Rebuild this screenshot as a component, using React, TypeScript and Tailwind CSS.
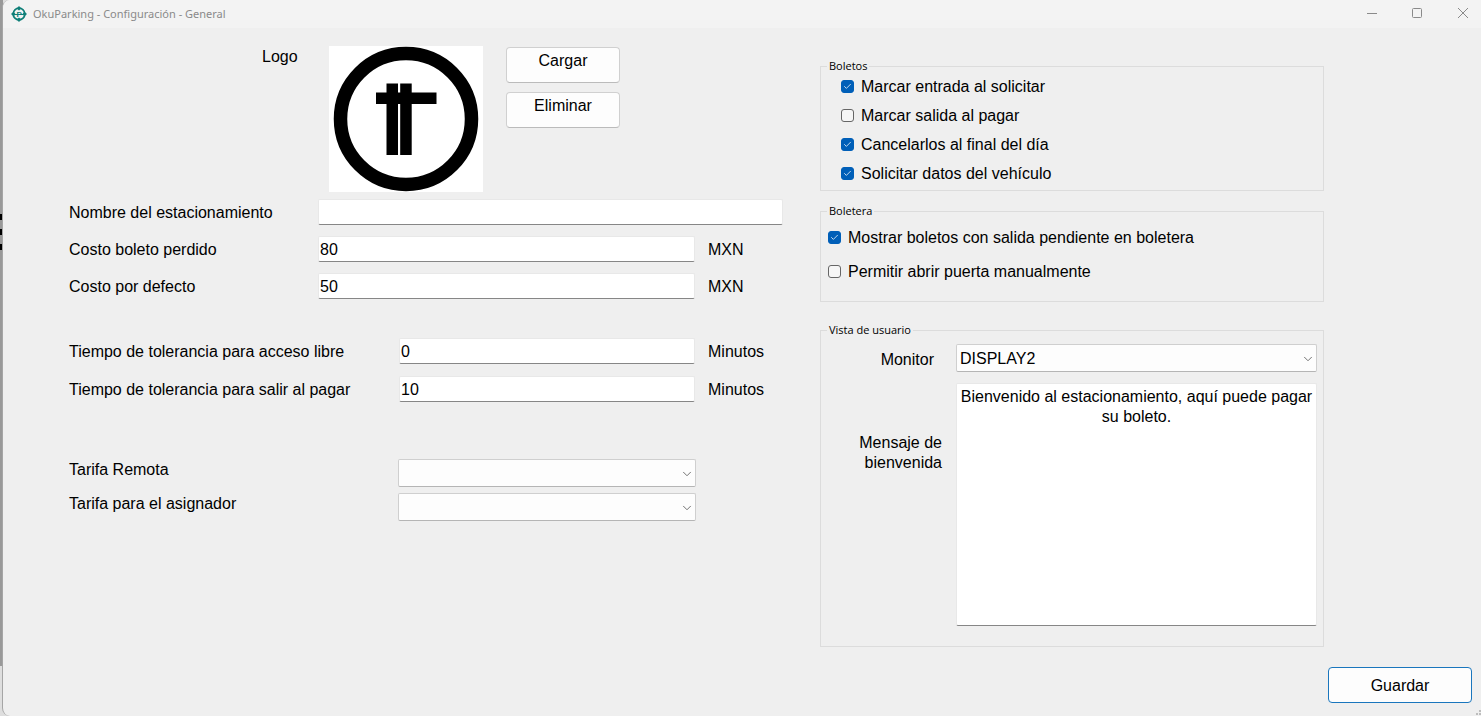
import { useState } from 'react'
import type { ReactNode } from 'react'
import { Check, ChevronDown } from 'lucide-react'

const inputClass =
  'h-[26px] min-w-0 flex-1 border border-[#e8e8e8] border-b-[#868686] rounded-xs bg-white px-px pt-[2px] outline-none'

function AppIcon() {
  return (
    <svg className="size-4 shrink-0" viewBox="0 0 16 16" fill="none" stroke="#0f7f78" aria-hidden="true">
      <circle cx="8" cy="8" r="5.8" strokeWidth="1.7" />
      <path d="M8 0l2.4 2.6L8 4.4 5.600 2.600zM8 16l2.400-2.600L8 11.600l-2.400 1.800zM0 8l2.600-2.400L4.400 8l-1.800 2.400zM16 8l-2.600-2.400L11.600 8l1.800 2.400z" fill="#0f7f78" stroke="none" />
      <path d="M3 8.500h10" strokeWidth="1" />
      <text x="8.200" y="10.800" textAnchor="middle" fontSize="8" fontWeight="700" fontFamily="Liberation Sans, sans-serif" fill="#0f7f78" stroke="none">
        P
      </text>
    </svg>
  )
}

function ParkingLogo() {
  return (
    <svg className="h-[146px] w-[154px] shrink-0 bg-white" viewBox="0 0 154 146" role="img" aria-label="Logo">
      <circle cx="77" cy="73" r="65.5" fill="none" stroke="#000" strokeWidth="13.5" />
      <rect x="57.5" y="37.5" width="11.5" height="71.5" />
      <rect x="71.2" y="37.5" width="11.5" height="71.5" />
      <rect x="47" y="46.5" width="60.5" height="11.5" />
    </svg>
  )
}

function TitleBar() {
  return (
    <header className="flex h-7 items-center bg-[#f3f3f3] pl-2 font-['Noto_Sans',sans-serif] text-[11px] text-[#8a8a8a]">
      <AppIcon />
      <h1 className="ml-[6px] flex-1">OkuParking - Configuración - General</h1>
      <button type="button" aria-label="Minimizar" className="flex h-7 w-[45px] items-center justify-center">
        <svg className="size-[10px]" viewBox="0 0 10 10" stroke="#8a8a8a" fill="none">
          <path d="M0 4.5h10" />
        </svg>
      </button>
      <button type="button" aria-label="Maximizar" className="flex h-7 w-[45px] items-center justify-center pb-[2px]">
        <svg className="size-[10px]" viewBox="0 0 10 10" stroke="#8a8a8a" fill="none">
          <rect x="0.5" y="0.5" width="9" height="9" rx="1" />
        </svg>
      </button>
      <button type="button" aria-label="Cerrar" className="flex h-7 w-[42px] items-center justify-center pb-[2px] pl-[5px]">
        <svg className="size-[10px]" viewBox="0 0 10 10" stroke="#8a8a8a" fill="none">
          <path d="M0 0l10 10M10 0L0 10" />
        </svg>
      </button>
    </header>
  )
}

type FieldProps = {
  id: string
  label: string
  value?: string
  unit?: string
  wide?: boolean
}

function Field({ id, label, value = '', unit, wide }: FieldProps) {
  const [text, setText] = useState(value)

  return (
    <div className="flex items-center">
      <label htmlFor={id} className={wide ? 'w-[330px] shrink-0 pt-px' : 'w-[249px] shrink-0 pt-[2px]'}>
        {label}
      </label>
      <input id={id} type="text" value={text} onChange={(e) => setText(e.target.value)} className={inputClass} />
      {unit && <span className="w-[88px] shrink-0 pl-[13px] pt-px">{unit}</span>}
    </div>
  )
}

function Select({ id, options }: { id: string; options: string[] }) {
  return (
    <div className="grid min-w-0 flex-1 items-center">
      <select
        id={id}
        className="col-start-1 row-start-1 h-7 w-full appearance-none rounded-xs border border-[#cfcfcf] border-b-[#b5b5b5] bg-[#fdfdfd] pl-[3px] pr-6 pt-[2px] outline-none"
      >
        {options.map((option) => (
          <option key={option}>{option}</option>
        ))}
      </select>
      <ChevronDown className="pointer-events-none col-start-1 row-start-1 mr-[2px] mt-px size-[14px] justify-self-end text-[#606060]" strokeWidth={1.5} />
    </div>
  )
}

function Checkbox({ label, checked }: { label: string; checked?: boolean }) {
  return (
    <label className="flex h-5 items-center gap-[7px]">
      <span className="grid place-items-center">
        <input
          type="checkbox"
          defaultChecked={checked}
          className="peer col-start-1 row-start-1 size-[13px] appearance-none rounded-[3px] border border-[#666] bg-[#f6f6f6] checked:border-[#005fb8] checked:bg-[#005fb8]"
        />
        <Check className="pointer-events-none invisible col-start-1 row-start-1 size-[9px] text-white peer-checked:visible" strokeWidth={2} />
      </span>
      <span className="pt-[2px]">{label}</span>
    </label>
  )
}

function Group({ title, className, children }: { title: string; className: string; children: ReactNode }) {
  return (
    <fieldset className={`min-w-0 border border-[#dcdcdc] ${className}`}>
      <legend className="ml-[6px] px-[2px] font-['Open_Sans',sans-serif] text-[11px] leading-4">{title}</legend>
      {children}
    </fieldset>
  )
}

function App() {
  const [message, setMessage] = useState('Bienvenido al estacionamiento, aquí puede pagar su boleto.')

  return (
    <div className="flex min-h-screen bg-[#dedede] font-['Liberation_Sans',Arial,sans-serif] text-base leading-5 text-black">
      <div className="flex w-[3px] shrink-0 flex-col pb-[50px]" aria-hidden="true">
        <div className="flex flex-1 flex-col gap-[9px] bg-[#999] pt-[214px]">
          <i className="h-[6px] w-[2px] bg-black" />
          <i className="h-[6px] w-[2px] bg-black" />
          <i className="h-[6px] w-[2px] bg-black" />
        </div>
      </div>

      <div className="-ml-px flex min-w-0 flex-1 flex-col overflow-hidden rounded-l-lg border-l border-[#a5a5a5] bg-[#efefef]">
        <TitleBar />

        <form className="flex flex-1 flex-col" onSubmit={(e) => e.preventDefault()}>
          <div className="grid grid-cols-[minmax(0,1fr)_504px] gap-[37px] pl-[66px] pr-[157px]">
            <section className="pt-[18px]">
              <div className="flex pl-[193px]">
                <span className="w-[67px] pt-px">Logo</span>
                <ParkingLogo />
                <div className="ml-[23px] flex flex-col gap-[9px] pt-px">
                  <button type="button" className="flex h-9 w-[114px] justify-center rounded border border-[#d0d0d0] border-b-[#bbb] bg-[#fdfdfd] pt-[3px]">
                    Cargar
                  </button>
                  <button type="button" className="flex h-9 w-[114px] justify-center rounded border border-[#d0d0d0] border-b-[#bbb] bg-[#fdfdfd] pt-[3px]">
                    Eliminar
                  </button>
                </div>
              </div>

              <div className="mt-[7px] flex flex-col gap-[11px]">
                <Field id="nombre" label="Nombre del estacionamiento" />
                <Field id="boleto-perdido" label="Costo boleto perdido" value="80" unit="MXN" />
                <Field id="costo-defecto" label="Costo por defecto" value="50" unit="MXN" />
              </div>

              <div className="mt-[39px] flex flex-col gap-3">
                <Field id="acceso-libre" label="Tiempo de tolerancia para acceso libre" value="0" unit="Minutos" wide />
                <Field id="salir-pagar" label="Tiempo de tolerancia para salir al pagar" value="10" unit="Minutos" wide />
              </div>

              <div className="mt-[57px] flex flex-col gap-[6px] pr-[87px]">
                <div className="flex">
                  <label htmlFor="tarifa-remota" className="w-[329px] shrink-0 pt-px">Tarifa Remota</label>
                  <Select id="tarifa-remota" options={['']} />
                </div>
                <div className="flex">
                  <label htmlFor="tarifa-asignador" className="w-[329px] shrink-0 pt-px">Tarifa para el asignador</label>
                  <Select id="tarifa-asignador" options={['']} />
                </div>
              </div>
            </section>

            <section className="flex flex-col pt-[30px]">
              <Group title="Boletos" className="h-[133px]">
                <div className="flex flex-col gap-[9px] pl-5 pt-[2px]">
                  <Checkbox label="Marcar entrada al solicitar" checked />
                  <Checkbox label="Marcar salida al pagar" />
                  <Checkbox label="Cancelarlos al final del día" checked />
                  <Checkbox label="Solicitar datos del vehículo" checked />
                </div>
              </Group>

              <Group title="Boletera" className="mt-3 h-[99px]">
                <div className="flex flex-col gap-[14px] pl-[7px] pt-2">
                  <Checkbox label="Mostrar boletos con salida pendiente en boletera" checked />
                  <Checkbox label="Permitir abrir puerta manualmente" />
                </div>
              </Group>

              <Group title="Vista de usuario" className="mt-5 pb-5">
                <div className="flex items-center pr-[6px] pt-[6px]">
                  <label htmlFor="monitor" className="w-[135px] shrink-0 pr-[22px] pt-[3px] text-right">Monitor</label>
                  <Select id="monitor" options={['DISPLAY2']} />
                </div>
                <div className="mt-[11px] flex pr-[6px]">
                  <label htmlFor="mensaje" className="w-[135px] shrink-0 pl-6 pr-[14px] pt-[50px] text-right">
                    Mensaje de bienvenida
                  </label>
                  <textarea
                    id="mensaje"
                    value={message}
                    onChange={(e) => setMessage(e.target.value)}
                    className="h-[243px] min-w-0 flex-1 resize-none rounded-xs border border-[#e8e8e8] border-b-[#868686] bg-white px-px pt-[3px] text-center outline-none"
                  />
                </div>
              </Group>
            </section>
          </div>

          <footer className="mt-auto flex items-end justify-end gap-[3px] pt-5">
            <button type="submit" className="mb-[13px] h-9 w-36 rounded border border-[#1a76bd] bg-[#fdfdfd] pt-[2px]">
              Guardar
            </button>
            <svg className="size-[6px]" viewBox="0 0 6 6" fill="#bdbdbd" aria-hidden="true">
              <path d="M4 0h2v2H4zM1 3h2v2H1zM4 3h2v2H4z" />
            </svg>
          </footer>
        </form>
      </div>
    </div>
  )
}

export default App
